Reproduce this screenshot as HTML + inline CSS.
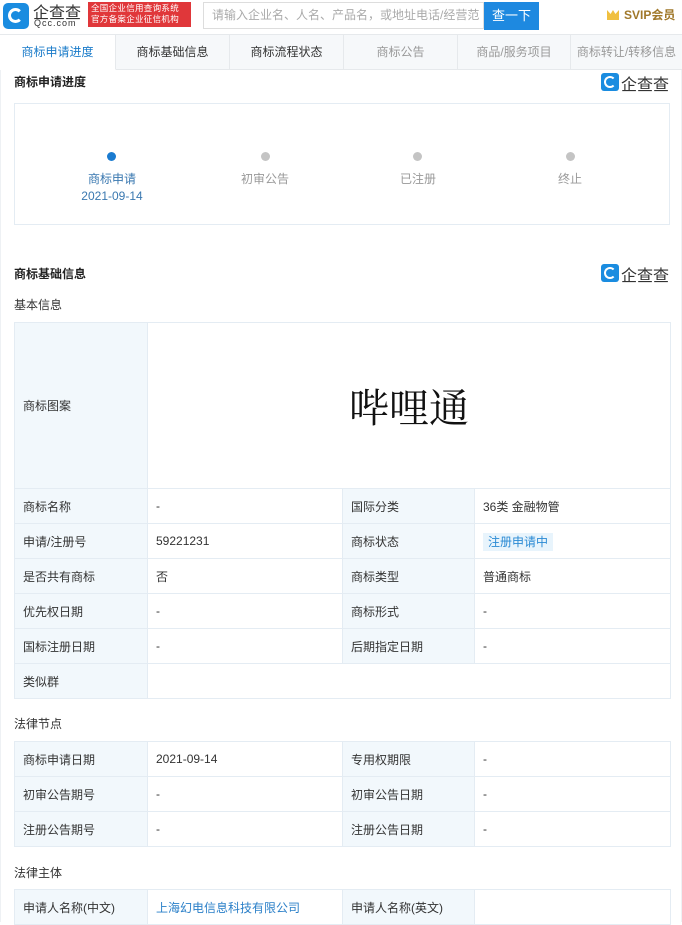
<!DOCTYPE html>
<html><head><meta charset="utf-8"><style>
*{margin:0;padding:0;box-sizing:border-box}
body{width:682px;height:922px;overflow:hidden;background:#fff;font-family:"Liberation Sans","Noto Sans CJK SC",sans-serif;font-size:12px;color:#333;position:relative}
.a{position:absolute}
.tab{position:absolute;top:35px;height:35px;line-height:34px;text-align:center;font-size:12px;background:#f6f8fa;border-right:1px solid #e6e9ec;border-bottom:1px solid #e6e9ec;color:#999}
.t{position:absolute;font-size:12px;font-weight:bold;color:#222}
.sub{position:absolute;font-size:12px;color:#333}
table{position:absolute;left:14px;width:656px;border-collapse:collapse;table-layout:fixed}
td{border:1px solid #e4ecf3;height:35px;padding:0 8px;font-size:12px;color:#333}
td.l{background:#f2f8fc}
.logo{position:absolute;width:68px;height:18px}
.logo .ic{position:absolute;left:0;top:0;width:18px;height:18px;background:#1a8ce0;border-radius:3px}
.logo .ic:after{content:"";position:absolute;left:3px;top:3px;width:8px;height:8px;border:2.5px solid #fff;border-radius:50%;border-right-color:transparent}
.logo span{position:absolute;left:20px;top:-2px;font-size:16px;color:#333;letter-spacing:0}
</style></head><body>
<div class="a" style="left:3px;top:3px;width:26px;height:26px;background:#1a8ce0;border-radius:5px"></div>
<div class="a" style="left:8px;top:8px;width:15px;height:15px;border:3px solid #fff;border-radius:50%;border-right-color:transparent"></div>
<div class="a" style="left:33px;top:-1px;font-size:16px;color:#333">企查查</div>
<div class="a" style="left:34px;top:18px;font-size:9px;color:#333;letter-spacing:1px">Qcc.com</div>
<div class="a" style="left:88px;top:2px;width:103px;height:25px;background:#e0373a;color:#fff;font-size:8.5px;line-height:11px;padding:1px 3px;letter-spacing:0.3px">全国企业信用查询系统<br>官方备案企业征信机构</div>
<div class="a" style="left:203px;top:2px;width:281px;height:27px;border:1px solid #ddd;background:#fff;color:#aaa;font-size:12px;line-height:25px;padding-left:8px;white-space:nowrap;overflow:hidden">请输入企业名、人名、产品名，或地址电话/经营范</div>
<div class="a" style="left:484px;top:2px;width:55px;height:28px;background:#1e89e0;color:#fff;font-size:13px;line-height:28px;text-align:center">查一下</div>
<div class="a" style="left:607px;top:10px;width:12px;height:10px;background:#f0c040;clip-path:polygon(0 0,30% 40%,50% 0,70% 40%,100% 0,100% 100%,0 100%)"></div>
<div class="a" style="left:624px;top:6px;font-size:12px;font-weight:bold;color:#a0782a">SVIP会员</div>
<div class="a" style="left:0;top:34px;width:682px;height:1px;background:#e6e9ec"></div>
<div class="tab" style="left:0;width:116px;background:#fff;color:#1a7bc9;border-bottom-color:#fff">商标申请进度</div>
<div class="tab" style="left:116px;width:114px;color:#333">商标基础信息</div>
<div class="tab" style="left:230px;width:114px;color:#333">商标流程状态</div>
<div class="tab" style="left:344px;width:114px">商标公告</div>
<div class="tab" style="left:458px;width:113px">商品/服务项目</div>
<div class="tab" style="left:571px;width:111px;border-right:none">商标转让/转移信息</div>
<div class="a" style="left:0;top:70px;width:1px;height:852px;background:#eef1f4"></div>
<div class="a" style="left:681px;top:70px;width:1px;height:852px;background:#eef1f4"></div>
<div class="t" style="left:14px;top:73px">商标申请进度</div>
<div class="logo" style="left:601px;top:73px"><div class="ic"></div><span>企查查</span></div>
<div class="a" style="left:14px;top:103px;width:656px;height:122px;border:1px solid #e4ecf3"></div>
<div class="a" style="left:107px;top:152px;width:9px;height:9px;border-radius:50%;background:#1a7bd0"></div>
<div class="a" style="left:261px;top:152px;width:9px;height:9px;border-radius:50%;background:#c4c4c4"></div>
<div class="a" style="left:413px;top:152px;width:9px;height:9px;border-radius:50%;background:#c4c4c4"></div>
<div class="a" style="left:566px;top:152px;width:9px;height:9px;border-radius:50%;background:#c4c4c4"></div>
<div class="a" style="left:62px;top:170px;width:100px;text-align:center;color:#3a78b0">商标申请</div>
<div class="a" style="left:62px;top:189px;width:100px;text-align:center;color:#3a78b0">2021-09-14</div>
<div class="a" style="left:215px;top:170px;width:100px;text-align:center;color:#999">初审公告</div>
<div class="a" style="left:368px;top:170px;width:100px;text-align:center;color:#999">已注册</div>
<div class="a" style="left:520px;top:170px;width:100px;text-align:center;color:#999">终止</div>
<div class="t" style="left:14px;top:265px">商标基础信息</div>
<div class="logo" style="left:601px;top:264px"><div class="ic"></div><span>企查查</span></div>
<div class="sub" style="left:14px;top:296px">基本信息</div>
<table style="top:322px">
<colgroup><col style="width:133px"><col style="width:195px"><col style="width:132px"><col style="width:196px"></colgroup>
<tr><td class="l" style="height:166px">商标图案</td><td colspan="3" style="text-align:center;padding:0;font-family:'Noto Serif CJK SC',serif;font-size:40px;color:#111">哔哩通</td></tr>
<tr><td class="l">商标名称</td><td>-</td><td class="l">国际分类</td><td>36类 金融物管</td></tr>
<tr><td class="l">申请/注册号</td><td>59221231</td><td class="l">商标状态</td><td><span style="background:#e8f4fc;color:#2a8ad4;padding:2px 5px">注册申请中</span></td></tr>
<tr><td class="l">是否共有商标</td><td>否</td><td class="l">商标类型</td><td>普通商标</td></tr>
<tr><td class="l">优先权日期</td><td>-</td><td class="l">商标形式</td><td>-</td></tr>
<tr><td class="l">国标注册日期</td><td>-</td><td class="l">后期指定日期</td><td>-</td></tr>
<tr><td class="l">类似群</td><td colspan="3"></td></tr>
</table>
<div class="sub" style="left:14px;top:715px">法律节点</div>
<table style="top:741px">
<colgroup><col style="width:133px"><col style="width:195px"><col style="width:132px"><col style="width:196px"></colgroup>
<tr><td class="l">商标申请日期</td><td>2021-09-14</td><td class="l">专用权期限</td><td>-</td></tr>
<tr><td class="l">初审公告期号</td><td>-</td><td class="l">初审公告日期</td><td>-</td></tr>
<tr><td class="l">注册公告期号</td><td>-</td><td class="l">注册公告日期</td><td>-</td></tr>
</table>
<div class="sub" style="left:14px;top:864px">法律主体</div>
<table style="top:889px">
<colgroup><col style="width:133px"><col style="width:195px"><col style="width:132px"><col style="width:196px"></colgroup>
<tr><td class="l">申请人名称(中文)</td><td style="color:#2a7fc8">上海幻电信息科技有限公司</td><td class="l">申请人名称(英文)</td><td></td></tr>
</table>
</body></html>
